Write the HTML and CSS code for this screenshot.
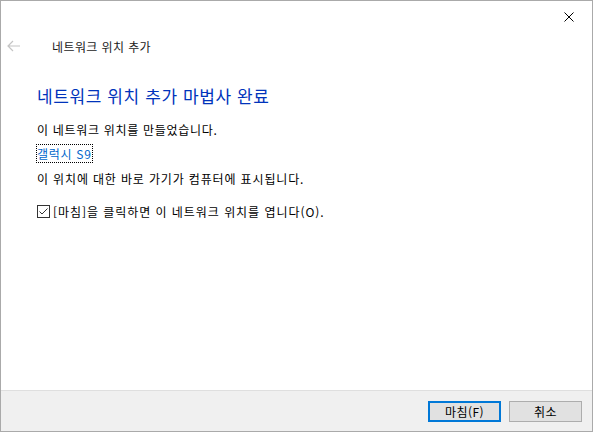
FILE: index.html
```html
<!DOCTYPE html>
<html lang="ko">
<head>
    <meta charset="UTF-8">
    <title>네트워크 위치 추가</title>
    <link rel="stylesheet" href="styles.css">
</head>
<body>
    <div class="window">
        <div class="titlebar">
            <span class="close">
                <svg width="10" height="10" viewBox="0 0 10 10"><path d="M0.5 0.5L9.5 9.5M9.5 0.5L0.5 9.5" stroke="#000" stroke-width="1"/></svg>
            </span>
        </div>
        <div class="nav">
            <svg class="back" width="14" height="12" viewBox="0 0 14 12"><path d="M1 6H13M6 1L1 6L6 11" stroke="#c4c4c4" stroke-width="1.2" fill="none"/></svg>
            <span class="nav-title">네트워크 위치 추가</span>
        </div>

        <!-- 본문 -->
        <div class="content">
            <h1 class="heading">네트워크 위치 추가 마법사 완료</h1>
            <p class="line">이 네트워크 위치를 만들었습니다.</p>
            <p class="line link-line"><a class="link" href="#">갤럭시 S9</a></p>
            <p class="line wide">이 위치에 대한 바로 가기가 컴퓨터에 표시됩니다.</p>
            <label class="check">
                <span class="box">
                    <svg width="9" height="7" viewBox="0 0 9 7"><path d="M0.5 3.5L3 6L8.5 0.5" stroke="#333" stroke-width="1" fill="none"/></svg>
                </span>
                [마침]을 클릭하면 이 네트워크 위치를 엽니다(O).
            </label>
        </div>

        <div class="footer">
            <button class="btn btn-default">마침(F)</button>
            <button class="btn">취소</button>
        </div>
    </div>
</body>
</html>
```

FILE: styles.css
```css
* {
    box-sizing: border-box;
}

body {
    margin: 0;
    font-family: "Noto Sans CJK KR", "Noto Sans", sans-serif;
    font-size: 12px;
    color: #000;
    background: #fff;
}

.window {
    width: 593px;
    height: 432px;
    border: 1px solid #aaaaaa;
    display: flex;
    flex-direction: column;
    background: #fff;
}

.titlebar {
    height: 30px;
    display: flex;
    justify-content: flex-end;
}

.close {
    width: 46px;
    display: flex;
    align-items: center;
    justify-content: center;
    padding-top: 2px;
}

.nav {
    height: 30px;
    display: flex;
    align-items: center;
}

.back {
    margin-left: 6px;
    margin-right: 31px;
}

.nav-title {
    color: #1a1a1a;
    letter-spacing: 0.4px;
}

.content {
    flex: 1;
    padding: 24px 0 0 36px;
}

.heading {
    margin: 0 0 14px;
    font-size: 17px;
    font-weight: normal;
    color: #0033bb;
    line-height: 22px;
    letter-spacing: 0.6px;
}

.line {
    margin: 0 0 7px;
    line-height: 17px;
    letter-spacing: 0.7px;
}

.line.wide {
    letter-spacing: 0.85px;
}

.link-line {
    margin-bottom: 8px;
}

.link {
    color: #0066cc;
    text-decoration: none;
    outline: 1px dotted #000;
}

.check {
    display: flex;
    align-items: center;
    margin-top: 16px;
    gap: 3px;
    letter-spacing: 0.95px;
}

.box {
    width: 13px;
    height: 13px;
    border: 1px solid #333;
    display: flex;
    align-items: center;
    justify-content: center;
}

.footer {
    height: 41px;
    border-top: 1px solid #dfdfdf;
    background: #f0f0f0;
    display: flex;
    justify-content: flex-end;
    align-items: center;
    gap: 8px;
    padding-right: 10px;
}

.btn {
    width: 73px;
    height: 21px;
    font-family: inherit;
    font-size: 12px;
    letter-spacing: 0.4px;
    background: #e1e1e1;
    border: 1px solid #adadad;
    padding: 0;
}

.btn-default {
    border: 2px solid #0078d7;
}
```
